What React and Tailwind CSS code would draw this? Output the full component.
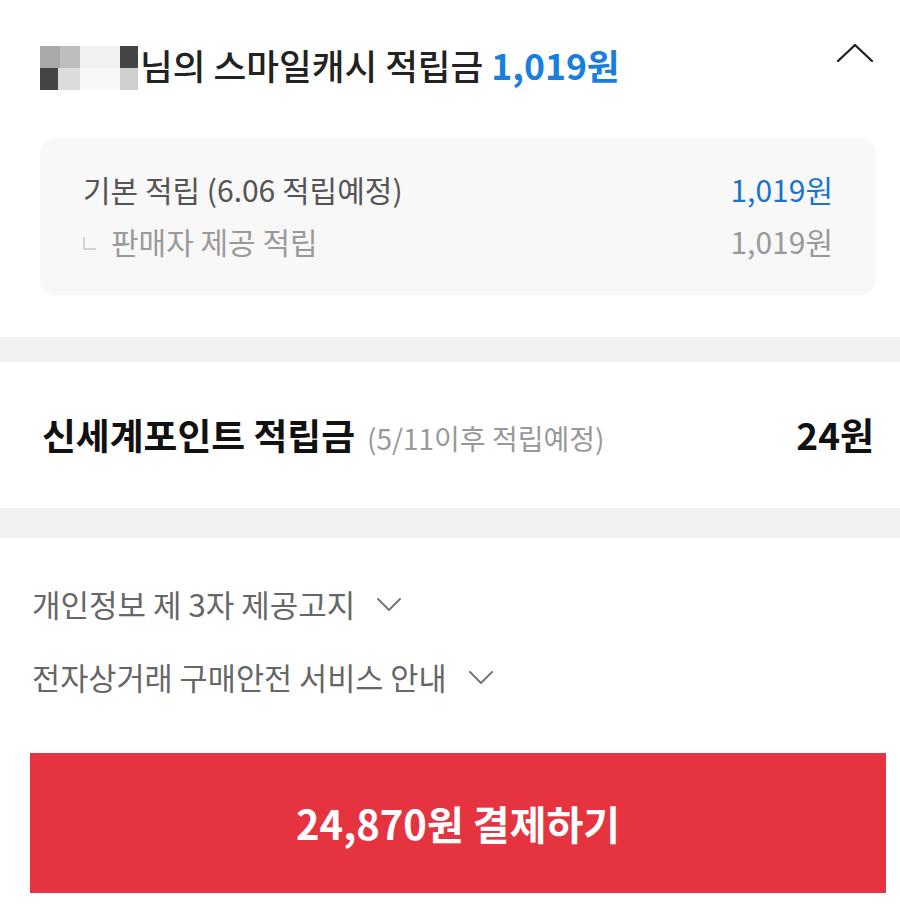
const font = { fontFamily: '"Noto Sans CJK KR", "Noto Sans", sans-serif' };

// pixelated (blurred) user name
function BlurredName() {
  return (
    <svg width="100" height="44" viewBox="0 0 100 44" className="shrink-0">
      <rect x="0" y="0" width="20" height="22" fill="#a9a9a9" />
      <rect x="20" y="0" width="20" height="22" fill="#bdbdbd" />
      <rect x="40" y="0" width="40" height="22" fill="#f1f1f1" />
      <rect x="80" y="0" width="18" height="22" fill="#444" />
      <rect x="0" y="22" width="18" height="22" fill="#444" />
      <rect x="18" y="22" width="22" height="22" fill="#dcdcdc" />
      <rect x="40" y="22" width="40" height="22" fill="#f7f7f7" />
      <rect x="80" y="22" width="18" height="22" fill="#cfcfcf" />
    </svg>
  );
}

function Chevron({ up, w, h, color, stroke }) {
  const pts = up ? `1,${h - 1} ${w / 2},1 ${w - 1},${h - 1}` : `1,1 ${w / 2},${h - 1} ${w - 1},1`;
  return (
    <svg width={w} height={h} viewBox={`0 0 ${w} ${h}`} className="shrink-0">
      <polyline points={pts} fill="none" stroke={color} strokeWidth={stroke} strokeLinecap="round" strokeLinejoin="round" />
    </svg>
  );
}

export default function App() {
  return (
    <div className="w-[900px] h-[908px] bg-white overflow-hidden" style={font}>
      {/* Smile cash header */}
      <div className="flex items-center justify-between pl-10 pr-[27px] pt-[46px]">
        <div className="flex items-center h-[44px]">
          <BlurredName />
          <span className="mb-[6px] text-[35.6px] font-medium text-[#222] leading-none whitespace-nowrap">
            님의 스마일캐시 적립금{" "}
            <span className="text-[#1a7fdc] font-semibold">1,019원</span>
          </span>
        </div>
        <div className="-mt-[30px]">
          <Chevron up w={36} h={18} color="#222" stroke={2.4} />
        </div>
      </div>

      <div className="mx-10 mt-[48px] w-[836px] h-[157px] rounded-2xl bg-[#f8f8f8] px-[43px] pt-[33px] flex flex-col gap-[16px]">
        <div className="flex justify-between items-center text-[30px] leading-[36px]">
          <span className="text-[#555]">기본 적립 (6.06 적립예정)</span>
          <span className="text-[#1a74cc]">1,019원</span>
        </div>
        <div className="flex justify-between items-center text-[30px] leading-[36px] text-[#9a9a9a]">
          <span className="flex items-center">
            <span className="inline-block w-[13px] h-[13px] border-l-2 border-b-2 border-[#d4d4d4] mr-[15px] mt-1" />
            판매자 제공 적립
          </span>
          <span>1,019원</span>
        </div>
      </div>

      <div className="mt-[42px] h-[25px] bg-[#f2f2f2]" />

      {/* Shinsegae point */}
      <div className="h-[146px] flex items-center justify-between pl-[42px] pr-[26px]">
        <div className="flex items-baseline whitespace-nowrap">
          <span className="text-[36.8px] font-bold text-[#111]">신세계포인트 적립금</span>
          <span className="ml-3 text-[28px] text-[#999]">(5/11이후 적립예정)</span>
        </div>
        <span className="text-[37px] font-bold text-[#111]">24원</span>
      </div>

      <div className="h-[30px] bg-[#f2f2f2]" />

      {/* notices */}
      <div className="pl-8 pt-[47px] flex flex-col gap-[35px]">
        <div className="flex items-center text-[31px] leading-[38px] text-[#666] whitespace-nowrap">
          개인정보 제 3자 제공고지
          <span className="ml-[22px]">
            <Chevron w={24} h={13} color="#777" stroke={2} />
          </span>
        </div>
        <div className="flex items-center text-[30.6px] leading-[38px] text-[#666] whitespace-nowrap">
          전자상거래 구매안전 서비스 안내
          <span className="ml-[22px]">
            <Chevron w={24} h={13} color="#777" stroke={2} />
          </span>
        </div>
      </div>

      <button className="mt-[57px] ml-[30px] w-[856px] h-[140px] bg-[#e5343f] text-white text-[40px] font-bold flex items-center justify-center">
        24,870원 결제하기
      </button>
    </div>
  );
}
